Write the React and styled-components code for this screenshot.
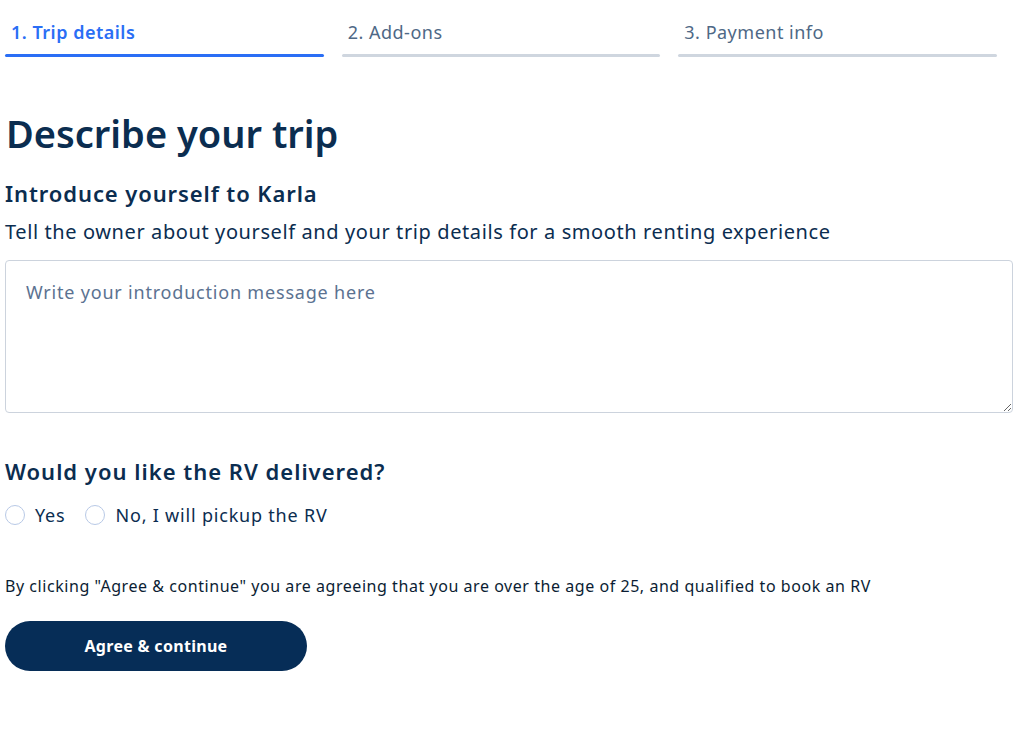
import React from 'react'
import styled, { createGlobalStyle } from 'styled-components'

const GlobalStyle = createGlobalStyle`
  body {
    margin: 0;
    background: #fff;
    font-family: "Noto Sans", "Lato", sans-serif;
    color: #0b2d50;
  }
`

const Page = styled.div`
  padding: 0 14px 0 5px;
  display: flex;
  flex-direction: column;
`

const Steps = styled.div`
  display: grid;
  grid-template-columns: repeat(3, 1fr);
  gap: 18px;
  width: 992px;
  padding-top: 18px;
`

const Step = styled.div`
  display: flex;
  flex-direction: column;
  font-size: 18px;
  line-height: 28px;
  letter-spacing: 0.5px;
  font-weight: ${p => (p.$active ? 600 : 400)};
  color: ${p => (p.$active ? '#2a6ef5' : '#4e6886')};
  padding-left: 6px;

  &::after {
    content: '';
    display: block;
    height: 3px;
    border-radius: 2px;
    margin: 8px 0 0 -6px;
    background: ${p => (p.$active ? '#2a6ef5' : '#cfd6df')};
  }
`

const Title = styled.h1`
  margin: 51px 0 0 1px;
  font-size: 38px;
  line-height: 50px;
  font-weight: 600;
  color: #0b2d50;
`

const SubTitle = styled.h2`
  margin: 20px 0 0;
  font-size: 22px;
  line-height: 30px;
  letter-spacing: 0.9px;
  font-weight: 600;
  color: #0b2d50;
`

const Lead = styled.p`
  margin: 10px 0 0;
  font-size: 20px;
  line-height: 28px;
  letter-spacing: 0.6px;
  color: #0b2d50;
`

const TextArea = styled.textarea`
  margin-top: 14px;
  box-sizing: border-box;
  width: 1008px;
  height: 153px;
  border: 1px solid #ccd3dd;
  border-radius: 4px;
  padding: 18px 20px;
  font-family: "Noto Sans", "Lato", sans-serif;
  font-size: 18px;
  line-height: 26px;
  letter-spacing: 0.8px;
  color: #0b2d50;
  resize: vertical;

  &::placeholder {
    color: #5b7291;
  }
`

const Question = styled.h2`
  margin: 43px 0 0;
  font-size: 22px;
  line-height: 30px;
  letter-spacing: 1px;
  font-weight: 600;
  color: #0b2d50;
`

const RadioRow = styled.div`
  display: flex;
  gap: 20px;
  margin-top: 17px;
`

const RadioLabel = styled.label`
  display: flex;
  align-items: center;
  gap: 10px;
  font-size: 18px;
  line-height: 24px;
  letter-spacing: 0.8px;
  color: #0b2d50;
`

const RadioCircle = styled.span`
  box-sizing: border-box;
  width: 20px;
  height: 20px;
  border-radius: 50%;
  border: 1px solid #b8c9e6;
  background: #fff;
`

const Disclaimer = styled.p`
  margin: 48px 0 0;
  font-size: 16px;
  line-height: 22px;
  letter-spacing: 0.55px;
  color: #0b1d33;
`

const Button = styled.button`
  margin-top: 24px;
  width: 302px;
  height: 50px;
  border: none;
  border-radius: 25px;
  background: #062d57;
  color: #fff;
  font-family: "Noto Sans", "Lato", sans-serif;
  font-size: 16px;
  letter-spacing: 0.3px;
  font-weight: 700;
  cursor: pointer;
`

const Radio = ({ label }) => (
  <RadioLabel>
    <RadioCircle />
    {label}
  </RadioLabel>
)

export default function App() {
  return (
    <>
      <GlobalStyle />
      <Page>
        <Steps>
          <Step $active>1. Trip details</Step>
          <Step>2. Add-ons</Step>
          <Step>3. Payment info</Step>
        </Steps>

        <Title>Describe your trip</Title>
        <SubTitle>Introduce yourself to Karla</SubTitle>
        <Lead>Tell the owner about yourself and your trip details for a smooth renting experience</Lead>
        <TextArea placeholder="Write your introduction message here" />

        <Question>Would you like the RV delivered?</Question>
        <RadioRow>
          <Radio label="Yes" />
          <Radio label="No, I will pickup the RV" />
        </RadioRow>

        <Disclaimer>
          By clicking "Agree &amp; continue" you are agreeing that you are over the age of 25, and qualified to book an RV
        </Disclaimer>
        <div>
          <Button>Agree &amp; continue</Button>
        </div>
      </Page>
    </>
  )
}
